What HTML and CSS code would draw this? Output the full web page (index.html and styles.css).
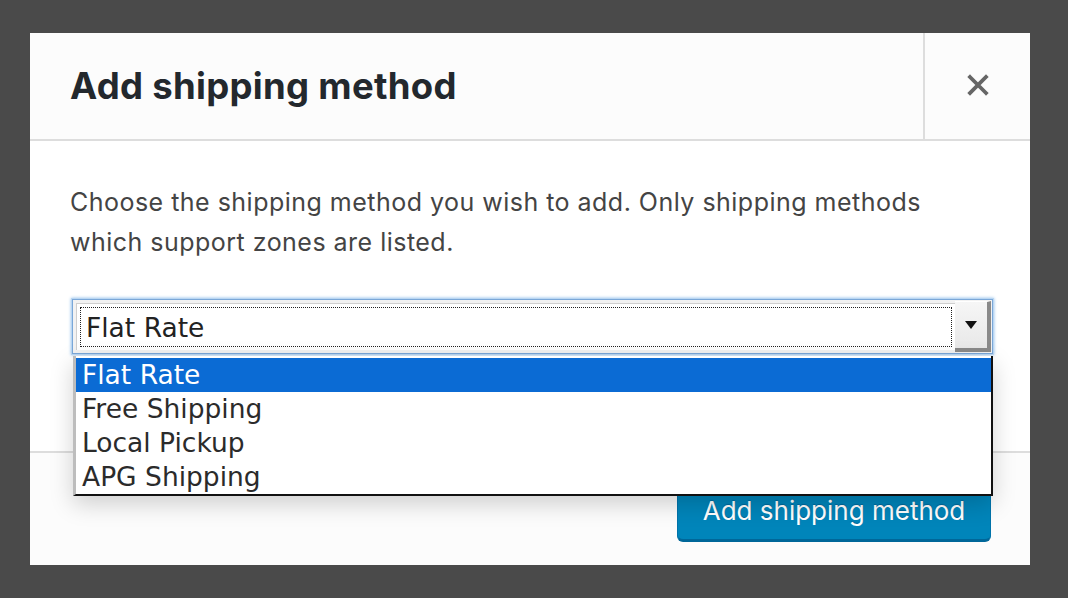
FILE: index.html
```html
<!DOCTYPE html>
<html>
<head>
<meta charset="utf-8">
<link rel="stylesheet" href="styles.css">
</head>
<body>
<div class="modal">
  <header class="modal-header">
    <h1 class="modal-title">Add shipping method</h1>
    <button class="modal-close" aria-label="Close">
      <svg width="24" height="24" viewBox="0 0 24 24"><path d="M4 4 L20 20 M20 4 L4 20" stroke="#666" stroke-width="3.8" stroke-linecap="square"/></svg>
    </button>
  </header>
  <section class="modal-body">
    <p class="intro">Choose the shipping method you wish to add. Only shipping methods which support zones are listed.</p>
    <div class="select-wrap">
      <div class="select">
        <div class="select-value"><span>Flat Rate</span></div>
        <div class="select-arrow"><span class="tri"></span></div>
      </div>
      <ul class="dropdown">
        <li class="opt selected">Flat Rate</li>
        <li class="opt">Free Shipping</li>
        <li class="opt">Local Pickup</li>
        <li class="opt">APG Shipping</li>
      </ul>
    </div>
  </section>
  <footer class="modal-footer">
    <button class="btn-primary">Add shipping method</button>
  </footer>
</div>
</body>
</html>
```

FILE: styles.css
```css
html, body {
  margin: 0;
  padding: 0;
  background: #4a4a4a;
  width: 1068px;
  height: 598px;
  overflow: hidden;
}

.modal {
  margin: 33px 0 0 30px;
  width: 1000px;
  height: 532px;
  display: flex;
  flex-direction: column;
  background: #fff;
  font-family: Inter, "Liberation Sans", sans-serif;
}

.modal-header {
  height: 106px;
  flex: none;
  display: flex;
  align-items: stretch;
  background: #fcfcfc;
  border-bottom: 2px solid #dddddd;
}

.modal-title {
  flex: 1;
  margin: 0;
  padding-left: 40px;
  display: flex;
  align-items: center;
  font-size: 36.5px;
  font-weight: 700;
  color: #23282d;
  letter-spacing: 0.3px;
  padding-bottom: 0;
}

.modal-close {
  width: 107px;
  flex: none;
  border: 0;
  border-left: 2px solid #dddddd;
  background: #fcfcfc;
  display: flex;
  align-items: center;
  justify-content: center;
  padding: 0;
  padding-bottom: 2px;
}

.modal-body {
  flex: 1;
  padding: 41px 40px 0 40px;
  background: #fff;
}

.intro {
  margin: 0;
  font-size: 25px;
  line-height: 40px;
  color: #444;
  letter-spacing: 0.48px;
}

.select-wrap {
  position: relative;
  margin-top: 37px;
  margin-left: 2px;
  width: 921px;
}

.select {
  height: 55px;
  box-sizing: border-box;
  border: 1px solid #7aa7d8;
  box-shadow: 0 0 0 1px #b9d6f2, 0 0 3px 1px #8ebdea;
  background: #f2f2f2;
  display: flex;
  padding: 3px;
}

.select-value {
  flex: 1;
  background: #fff;
  border-top: 1px solid #cfcfcf;
  border-left: 1px solid #cfcfcf;
  padding: 3px;
  display: flex;
}

.select-value span {
  flex: 1;
  border: 1px dotted #222;
  display: flex;
  align-items: center;
  padding-left: 5px;
  font-family: "DejaVu Sans", sans-serif;
  font-size: 26.5px;
  color: #222;
}

.select-arrow {
  width: 32px;
  flex: none;
  background: linear-gradient(#f6f6f6, #e8e8e8);
  border-right: 4px solid #8a8a8a;
  border-bottom: 4px solid #8a8a8a;
  border-top: 1px solid #fff;
  display: flex;
  align-items: center;
  justify-content: center;
  margin: -2px -2px -2px 0;
}

.tri {
  width: 0;
  height: 0;
  border-left: 6px solid transparent;
  border-right: 6px solid transparent;
  border-top: 8px solid #111;
}

.dropdown {
  position: absolute;
  left: 1px;
  top: 57px;
  width: 915px;
  margin: 0;
  padding: 2px 0 0 0;
  list-style: none;
  background: #fff;
  border-left: 3px solid #bdbdbd;
  border-right: 2px solid #111;
  border-bottom: 2px solid #111;
  box-shadow: 0 8px 22px rgba(0,0,0,0.18);
  z-index: 5;
}

.opt {
  height: 34px;
  line-height: 34px;
  padding-left: 6px;
  font-family: "DejaVu Sans", sans-serif;
  font-size: 26.5px;
  color: #2b2b2b;
}

.opt.selected {
  background: #0b6bd4;
  color: #fff;
}

.modal-footer {
  height: 114px;
  flex: none;
  box-sizing: border-box;
  background: #fcfcfc;
  border-top: 2px solid #dddddd;
  display: flex;
  align-items: center;
  justify-content: flex-end;
  padding: 0 39px 0 0;
}

.btn-primary {
  height: 62px;
  width: 314px;
  margin-top: 4px;
  border: 1px solid #0073aa;
  border-bottom: 3px solid #006799;
  border-radius: 6px;
  background: #0085ba;
  color: #fff;
  font-family: Inter, "Liberation Sans", sans-serif;
  font-size: 26px;
  text-shadow: 0 -1px 1px #006799;
  padding: 0;
}
```
